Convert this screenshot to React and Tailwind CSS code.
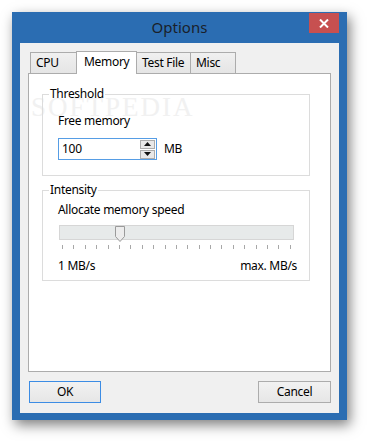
import { useState } from 'react'

const tabs = ['CPU', 'Memory', 'Test File', 'Misc']
const tabWidths = { CPU: 'w-[47px]', Memory: 'w-[61px]', 'Test File': 'w-[55px]', Misc: 'w-[46px]' }

/* Group box — fieldset + legend, like a Win32 group */
function GroupBox({ title, children, className = '' }) {
  return (
    <fieldset className={`border border-[#dcdcdc] mx-0 ${className}`}>
      <legend className="ml-[6px] px-[1px] leading-[16px]">{title}</legend>
      {children}
    </fieldset>
  )
}

function Spinner() {
  return (
    <div className="flex flex-col gap-[1px] mr-[1px]">
      <div className="w-[15px] h-[9px] border border-[#acacac] bg-[#e8e8e8] flex items-center justify-center">
        <svg width="7" height="4" viewBox="0 0 7 4"><path d="M0 4 L3.5 0 L7 4 Z" fill="#111" /></svg>
      </div>
      <div className="w-[15px] h-[9px] border border-[#acacac] bg-[#e8e8e8] flex items-center justify-center">
        <svg width="7" height="4" viewBox="0 0 7 4"><path d="M0 0 L7 0 L3.5 4 Z" fill="#111" /></svg>
      </div>
    </div>
  )
}

function Slider({ pos }) {
  return (
    <div className="mt-[7px] w-[235px] ml-[1px]">
      <div className="relative h-[15px] bg-[#e7eaea] border border-[#d6d6d6]">
        <svg className="absolute top-[0px]" style={{ left: pos }} width="10" height="16" viewBox="0 0 10 16">
          <path d="M0.5 0.5 H9.5 V10.5 L5 15.5 L0.5 10.5 Z" fill="#ececec" stroke="#9a9a9a" />
        </svg>
      </div>
      <div className="mt-[5px] flex justify-between px-[3px]">
        {Array.from({ length: 21 }).map((_, i) => (
          <div key={i} className="w-px h-[4px] bg-[#a8a8a8]" />
        ))}
      </div>
    </div>
  )
}

export default function App() {
  const [aba, setAba] = useState('Memory')

  return (
    <div
      className="w-[367px] h-[441px] bg-white pt-[12px] pl-[12px] text-[12px] tracking-[-0.3px] text-black"
      style={{ fontFamily: '"Segoe UI", "Noto Sans", sans-serif' }}
    >
      {/* Janela */}
      <div className="relative w-[335px] h-[408px] bg-[#2b6db2] shadow-[3px_5px_12px_rgba(0,0,0,0.5)] flex flex-col">
        {/* Barra de título */}
        <div className="h-[31px] flex items-center justify-center text-[15px] tracking-normal text-[#1a1f2a]">
          Options
        </div>
        <button className="absolute top-[1px] right-[8px] w-[30px] h-[20px] bg-[#c75050] flex items-center justify-center">
          <svg width="10" height="9" viewBox="0 0 10 9">
            <path d="M1 0.5 L9 8.5 M9 0.5 L1 8.5" stroke="white" strokeWidth="2" />
          </svg>
        </button>

        {/* Área cliente */}
        <div className="mx-[8px] h-[370px] bg-[#f0f0f0] pt-[8px] px-[8px] flex flex-col">
          {/* Abas */}
          <div className="flex items-end h-[22px] pl-[2px] relative z-10">
            {tabs.map((t, i) => {
              const ativo = aba === t
              return (
                <button
                  key={t}
                  onClick={() => setAba(t)}
                  className={`${tabWidths[t]} ${i > 0 ? '-ml-px' : ''} border border-[#acacac] text-left ${
                    ativo
                      ? 'h-[23px] bg-white border-b-0 -mb-px relative z-10 pl-[7px] pb-[3px]'
                      : 'h-[21px] bg-gradient-to-b from-[#f0f0f0] to-[#e5e5e5] border-b-0 pl-[5px]'
                  }`}
                >
                  {t}
                </button>
              )
            })}
          </div>

          {/* Painel */}
          <div className="relative h-[299px] bg-white border border-[#acacac] pt-[12px] pl-[13px] overflow-hidden">
            {/* marca d'água */}
            <div className="absolute left-[2px] top-[13px] text-[27px] tracking-[2px] text-[#f1f1f1] pointer-events-none" style={{ fontFamily: '"Liberation Serif", serif' }}>
              SOFTPEDIA
            </div>

            <GroupBox title="Threshold" className="w-[268px] pb-[15px] relative">
              <div className="pl-[15px] pt-[11px] leading-[16px]">Free memory</div>
              <div className="pl-[15px] mt-[9px] flex items-center">
                <div className="w-[99px] h-[22px] border border-[#569de5] bg-white flex items-center justify-between">
                  <span className="pl-[3px]">100</span>
                  <Spinner />
                </div>
                <span className="ml-[7px]">MB</span>
              </div>
            </GroupBox>

            <GroupBox title="Intensity" className="w-[268px] mt-[6px] pb-[6px]">
              <div className="pl-[15px] pt-[4px] leading-[16px]">Allocate memory speed</div>
              <div className="pl-[15px]">
                <Slider pos={55} />
              </div>
              <div className="pl-[15px] pr-[12px] mt-[9px] flex justify-between leading-[16px]">
                <span>1 MB/s</span>
                <span>max. MB/s</span>
              </div>
            </GroupBox>
          </div>

          {/* Botões */}
          <div className="mt-[9px] flex justify-between pl-[1px]">
            <button className="w-[72px] h-[22px] border border-[#3c8ce4] bg-gradient-to-b from-[#f2f2f2] to-[#e6e6e6]">OK</button>
            <button className="w-[73px] h-[22px] border border-[#acacac] bg-gradient-to-b from-[#f2f2f2] to-[#e6e6e6]">Cancel</button>
          </div>
        </div>
      </div>
    </div>
  )
}
